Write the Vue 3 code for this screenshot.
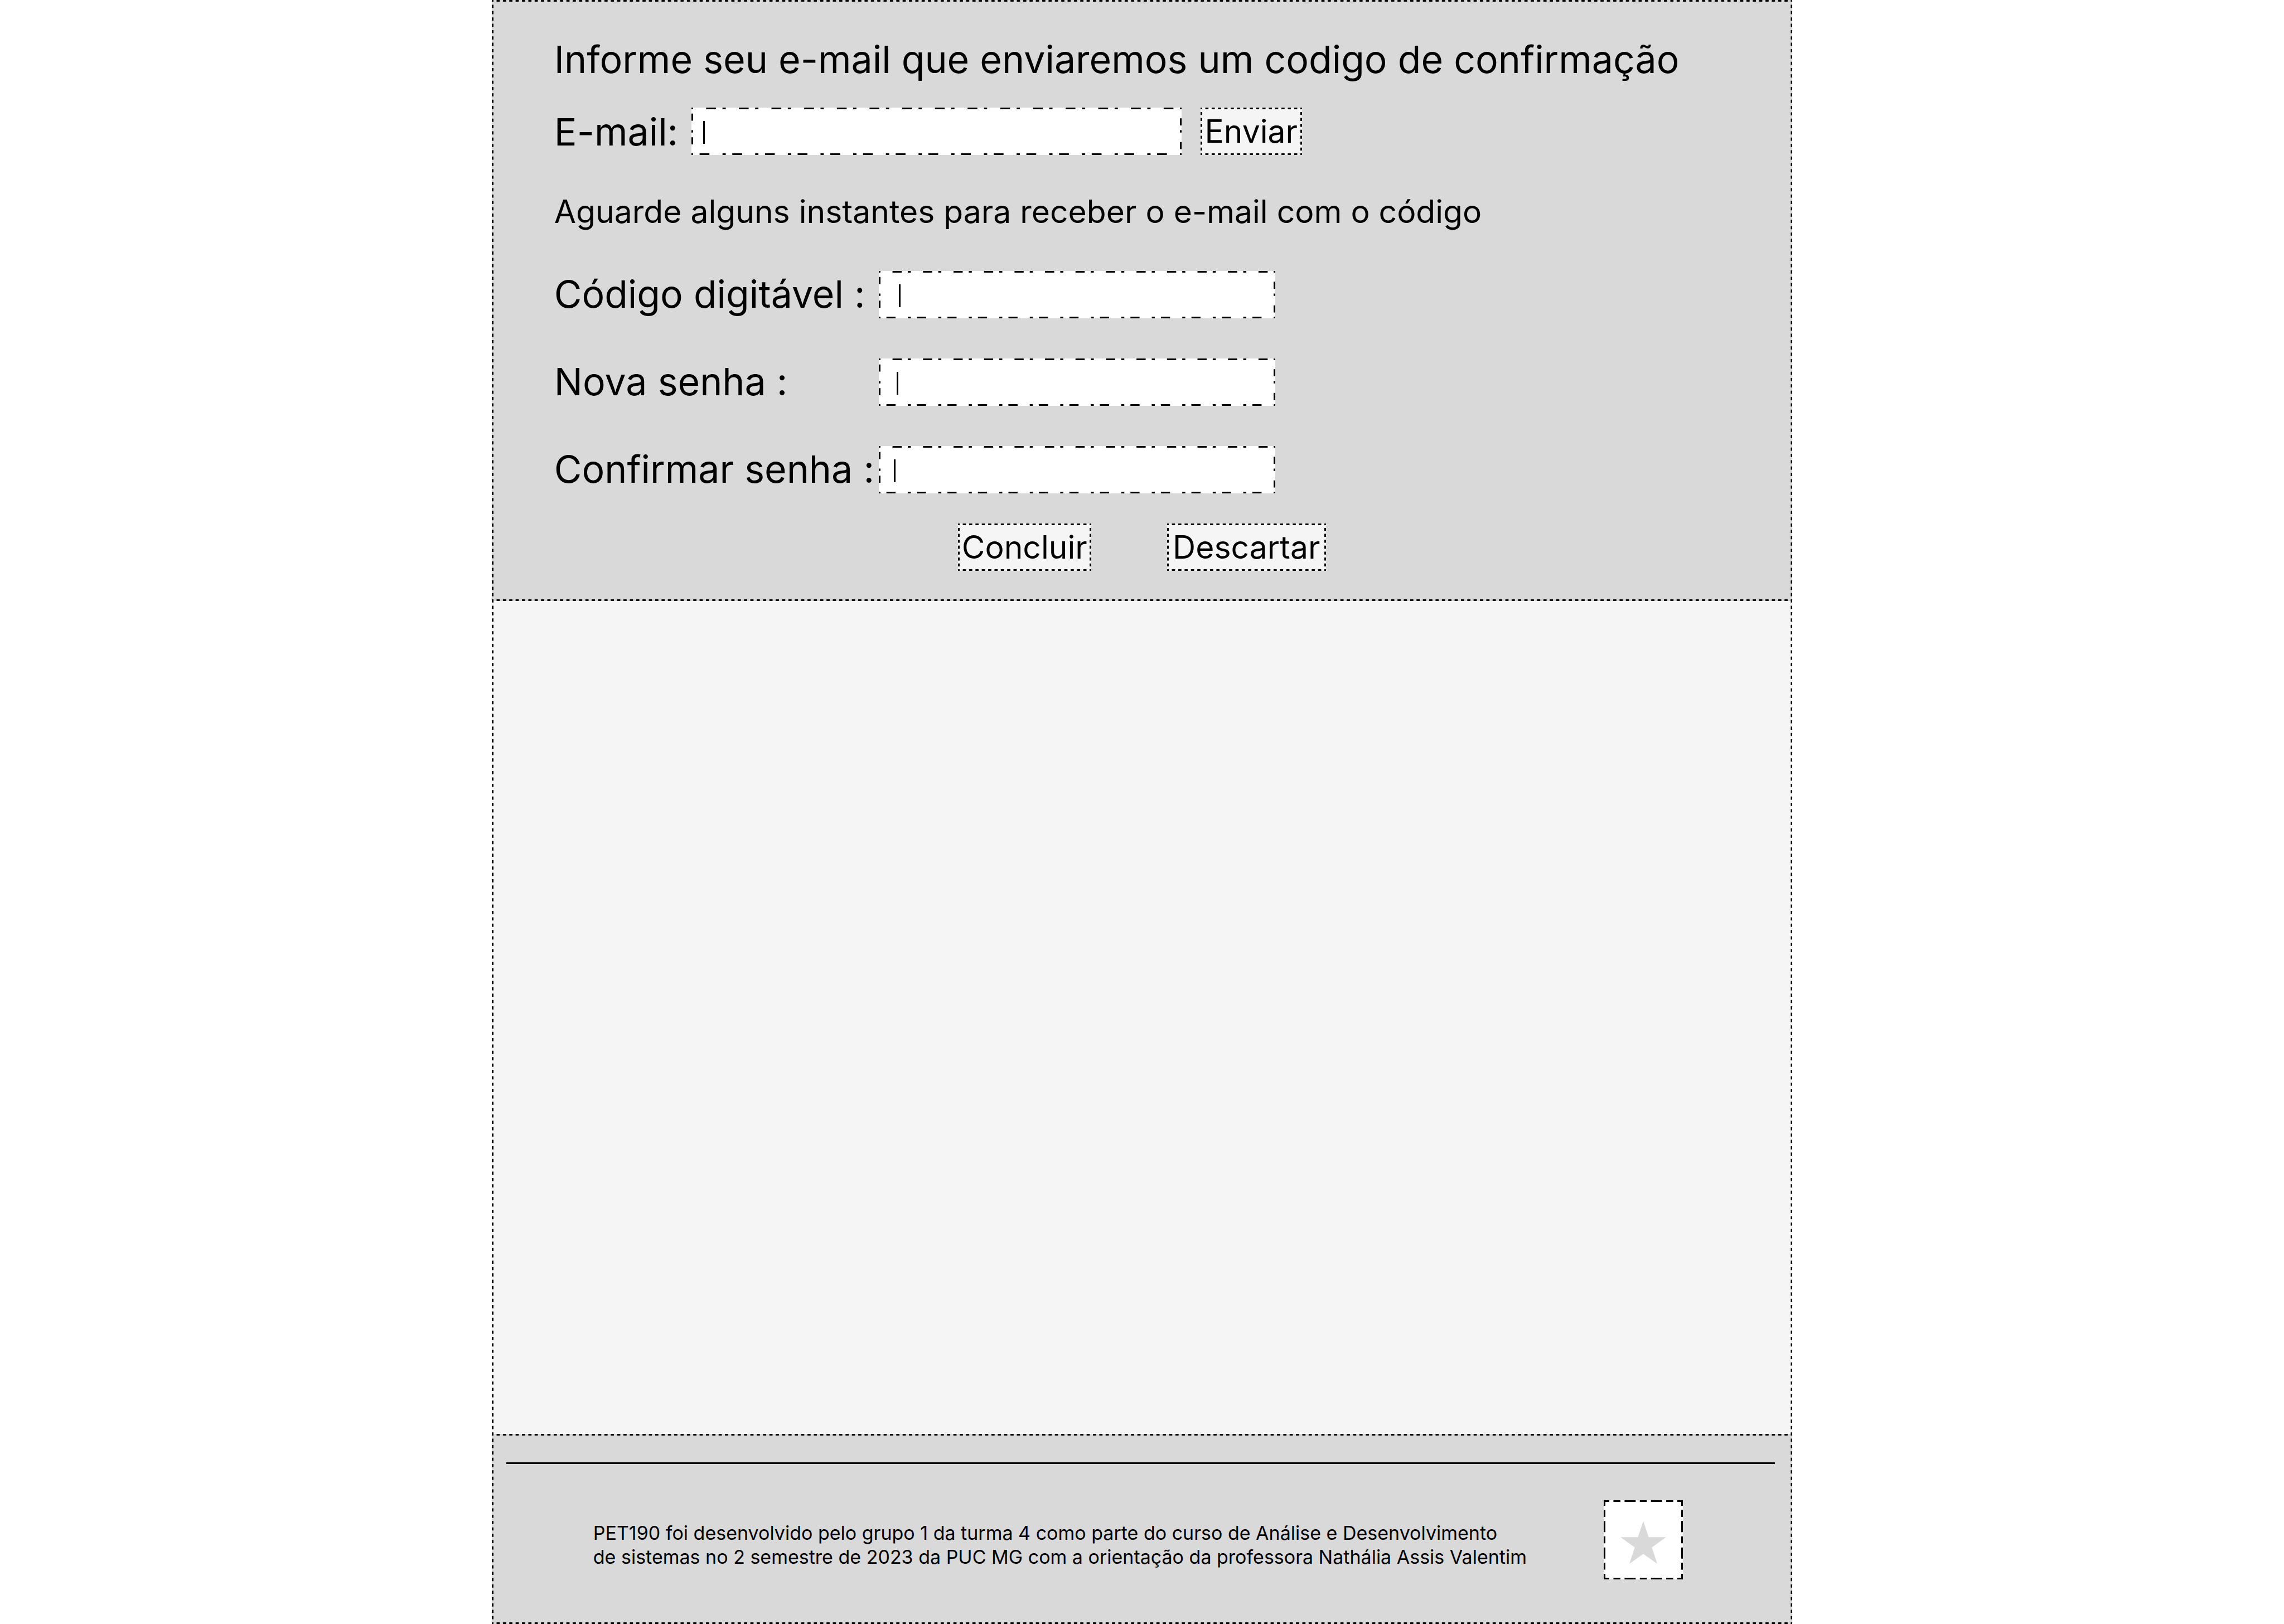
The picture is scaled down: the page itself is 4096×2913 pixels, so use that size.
<script setup>
import { reactive } from 'vue'

// Dash patterns: lengths of dash and gap, in turn.
const DOTTED = [2, 2]
const DASH_DOT = [2, 8, 6, 4]
const LONG_SHORT = [8, 3, 5, 3]

// Fits a whole number of dash periods on every side, so that a dash is centred on each corner.
function outline(width, height, pattern, sides = ['top', 'right', 'bottom', 'left']) {
  const period = pattern.reduce((sum, n) => sum + n, 0)
  const fit = (length) => Math.round(length / period) * period
  const ends = {
    top: { x1: '0', y1: '0', x2: '100%', y2: '0', pathLength: fit(width) },
    right: { x1: '100%', y1: '0', x2: '100%', y2: '100%', pathLength: fit(height) },
    bottom: { x1: '100%', y1: '100%', x2: '0', y2: '100%', pathLength: fit(width) },
    left: { x1: '0', y1: '100%', x2: '0', y2: '0', pathLength: fit(height) },
  }
  return sides.map((side) => ({
    ...ends[side],
    'stroke-dasharray': pattern.join(' '),
    'stroke-dashoffset': pattern[0] / 2,
  }))
}

const panelOutline = outline(820, 379, DOTTED)
const contentOutline = outline(820, 525, DOTTED, ['left', 'right'])
const footerOutline = outline(820, 120, DOTTED)
const emailOutline = outline(309, 30, DASH_DOT)
const fieldOutline = outline(250, 30, DASH_DOT)
const sendOutline = outline(64, 30, DOTTED)
const logoOutline = outline(50, 50, LONG_SHORT)

const form = reactive({ email: '', codigo: '', senha: '', confirmacao: '' })

const fields = [
  { id: 'codigo', label: 'Código digitável :', type: 'text', caret: 36 },
  { id: 'senha', label: 'Nova senha :', type: 'password', caret: 32 },
  { id: 'confirmacao', label: 'Confirmar senha :', type: 'password', caret: 27 },
]

const actions = [
  { label: 'Concluir', type: 'submit', size: 'medium', lines: outline(84, 30, DOTTED) },
  { label: 'Descartar', type: 'reset', size: 'large', lines: outline(100, 30, DOTTED) },
]
</script>

<template>
  <div class="page">
    <div class="frame">
      <main class="panel">
        <svg class="outline" aria-hidden="true">
          <line v-for="(line, i) in panelOutline" :key="i" v-bind="line" />
        </svg>

        <h1 class="title">Informe seu e-mail que enviaremos um codigo de confirmação</h1>

        <form class="email-row" @submit.prevent>
          <label class="label email-label" for="email">E-mail:</label>
          <div class="field email-field">
            <input id="email" v-model="form.email" class="input" type="email" />
            <svg class="outline" aria-hidden="true">
              <line v-for="(line, i) in emailOutline" :key="i" v-bind="line" />
              <rect class="caret" x="21" y="24" width="3" height="41" />
            </svg>
          </div>
          <button class="button small" type="submit">
            Enviar
            <svg class="outline" aria-hidden="true">
              <line v-for="(line, i) in sendOutline" :key="i" v-bind="line" />
            </svg>
          </button>
        </form>

        <p class="hint">Aguarde alguns instantes para receber o e-mail com o código</p>

        <form @submit.prevent>
          <div class="fields">
            <div v-for="item in fields" :key="item.id" class="field-row">
              <label class="label" :for="item.id">{{ item.label }}</label>
              <div class="field">
                <input :id="item.id" v-model="form[item.id]" class="input" :type="item.type" autocomplete="off" />
                <svg class="outline" aria-hidden="true">
                  <line v-for="(line, i) in fieldOutline" :key="i" v-bind="line" />
                  <rect class="caret" :x="item.caret" y="24" width="3" height="41" />
                </svg>
              </div>
            </div>
          </div>

          <div class="actions">
            <button
              v-for="action in actions"
              :key="action.label"
              class="button"
              :class="action.size"
              :type="action.type"
            >
              {{ action.label }}
              <svg class="outline" aria-hidden="true">
                <line v-for="(line, i) in action.lines" :key="i" v-bind="line" />
              </svg>
            </button>
          </div>
        </form>
      </main>

      <div class="content">
        <svg class="outline" aria-hidden="true">
          <line v-for="(line, i) in contentOutline" :key="i" v-bind="line" />
        </svg>
      </div>

      <footer class="footer">
        <svg class="outline" aria-hidden="true">
          <line v-for="(line, i) in footerOutline" :key="i" v-bind="line" />
        </svg>
        <hr class="rule" />
        <div class="footer-row">
          <p class="credits">
            PET190 foi desenvolvido pelo grupo 1 da turma 4 como parte do curso de Análise e Desenvolvimento<br />
            de sistemas no 2 semestre de 2023 da PUC MG com a orientação da professora Nathália Assis Valentim
          </p>
          <div class="logo">
            <svg class="star" viewBox="0 0 50 50" aria-hidden="true">
              <path
                d="M25 13.2 28.4 23.3H39.3L30.4 29.8 33.8 40.1 25 33.9 16.2 40.1 19.6 29.8 10.7 23.3H21.6Z"
              />
            </svg>
            <svg class="outline" aria-hidden="true">
              <line v-for="(line, i) in logoOutline" :key="i" v-bind="line" />
            </svg>
          </div>
        </div>
      </footer>
    </div>
  </div>
</template>

<style>
body {
  margin: 0;
  background: #fff;
}
</style>

<style scoped>
.page {
  display: grid;
  grid-template-columns: 31fr 82fr 31fr;
  min-height: 100vh;
  color: #000;
  font-family: Inter, 'Liberation Sans', sans-serif;
}

.frame {
  grid-column: 2;
  display: flex;
  flex-direction: column;
  min-width: 0;
}

/* The stroke is centred on the edge, and the half outside is clipped. */
.outline {
  position: absolute;
  inset: 0;
  width: 100%;
  height: 100%;
  overflow: hidden;
  fill: none;
  stroke: #000;
  stroke-width: 6px;
  pointer-events: none;
}

.caret {
  fill: #000;
  stroke: none;
}

.panel {
  position: relative;
  box-sizing: border-box;
  padding: 65px 112px 54px;
  background: #d9d9d9;
}

.title {
  margin: 0 0 46px;
  font-size: 68px;
  font-weight: 400;
  line-height: 82px;
}

.email-row {
  display: flex;
  align-items: center;
}

.label {
  flex: none;
  width: 582px;
  font-size: 68px;
  line-height: 82px;
  white-space: nowrap;
}

.email-label {
  width: 246px;
}

.field {
  position: relative;
  flex: 0 1 711px;
  height: 85px;
}

.email-field {
  flex-basis: 879px;
  margin-right: 34px;
}

.input {
  display: block;
  box-sizing: border-box;
  width: 100%;
  height: 100%;
  padding: 0 28px;
  border: 0;
  outline: 0;
  border-radius: 0;
  background: #fff;
  color: inherit;
  font: inherit;
  font-size: 57px;
}

.button {
  position: relative;
  flex: none;
  height: 85px;
  padding: 0;
  border: 0;
  background: #f5f5f5;
  color: inherit;
  font-family: inherit;
  font-size: 57px;
  line-height: 70px;
  text-align: center;
  cursor: pointer;
}

.small {
  width: 182px;
}

.medium {
  width: 239px;
}

.large {
  width: 285px;
}

.hint {
  margin: 67px 0 71px;
  font-size: 57px;
  line-height: 70px;
}

.fields {
  display: grid;
  gap: 72px;
}

.field-row {
  display: flex;
  align-items: flex-start;
}

.actions {
  display: flex;
  gap: 136px;
  margin-top: 54px;
  padding-left: 724px;
}

.content {
  position: relative;
  flex: 1;
  background: #f5f5f5;
}

.footer {
  position: relative;
  padding: 51px 0 80px;
  background: #d9d9d9;
}

.rule {
  height: 3px;
  margin: 0 31px 65px 26px;
  border: 0;
  background: #000;
}

.footer-row {
  display: flex;
  align-items: center;
  justify-content: space-between;
  padding: 0 196px 0 182px;
}

.credits {
  margin: 0;
  padding-top: 18px;
  font-size: 34px;
  line-height: 43px;
}

.logo {
  position: relative;
  flex: none;
  width: 142px;
  height: 142px;
  background: #fff;
}

.star {
  display: block;
  width: 100%;
  height: 100%;
  fill: #d9d9d9;
}
</style>
